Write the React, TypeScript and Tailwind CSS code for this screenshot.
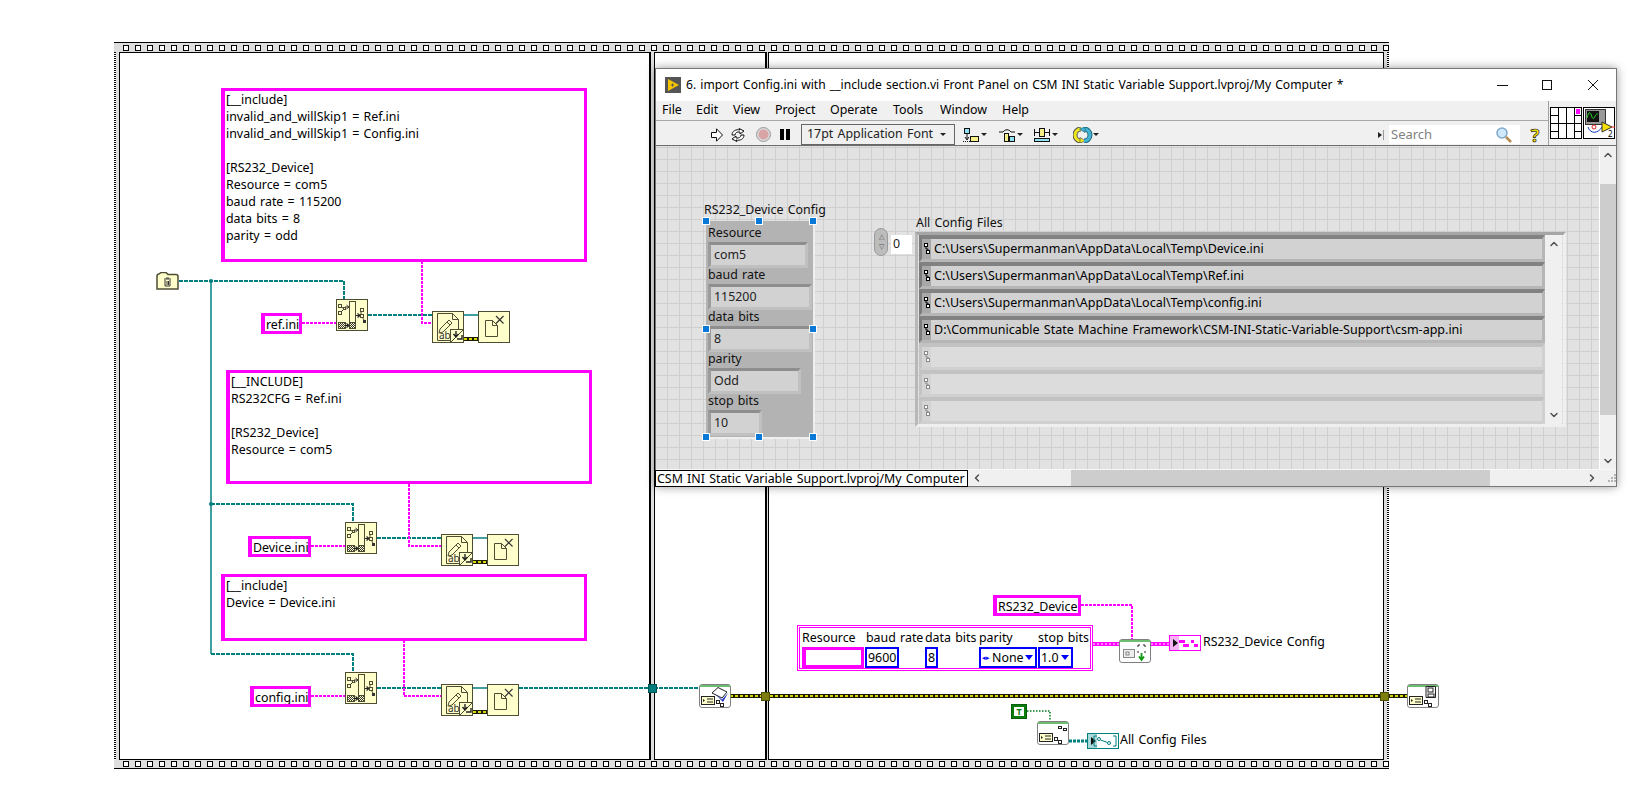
import { ChevronDown, ChevronLeft, ChevronRight, ChevronUp } from "lucide-react";
import type { ReactNode } from "react";

const squares = Array.from({ length: 106 }, (_, i) => i);

const tealWires = [
  "M179 281H344V299",
  "M211 654H353V672",
  "M211 504H353V522",
  "M368 315H432",
  "M377 538H441",
  "M377 688H441",
  "M519 688H699",
];

const pinkWires = [
  "M302 323H336",
  "M422 261V323H432",
  "M311 546H345",
  "M409 484V546H441",
  "M311 696H345",
  "M404 640V696H441",
  "M1081 605H1132V639",
];

const errorWires = [
  "M464 339H478",
  "M473 562H487",
  "M473 712H487",
  "M730 696H1407",
];

function StringBox({ className, text }: { className: string; text: string }) {
  return (
    <div
      className={`absolute bg-white border-[3px] border-l-[4px] border-[#ff00ff] pl-[1px] text-[12.4px] leading-[17px] text-black whitespace-pre overflow-hidden ${className}`}
    >
      {text}
    </div>
  );
}

function Filmstrip() {
  return (
    <div className="h-[10px] bg-[#dedede] border-t border-black flex items-center gap-[6px] pl-[9px] overflow-hidden">
      {squares.map((i) => (
        <div key={i} className="w-[6px] h-[6px] shrink-0 bg-white border-[1.5px] border-black" />
      ))}
    </div>
  );
}

function Checker() {
  return (
    <div className="w-[2px] bg-[repeating-linear-gradient(to_bottom,#000_0,#000_1px,#fff_1px,#fff_2px)]" />
  );
}

function Divider({ className }: { className: string }) {
  return <div className={`bg-[#dedede] border-l-2 border-r border-black ${className}`} />;
}

function Hatch() {
  return (
    <defs>
      <pattern id="hatch" width="2" height="2" patternUnits="userSpaceOnUse">
        <rect width="2" height="2" fill="#ffffcc" />
        <rect width="1" height="1" fill="#333" />
        <rect x="1" y="1" width="1" height="1" fill="#333" />
      </pattern>
    </defs>
  );
}

function BuildPathIcon({ className }: { className: string }) {
  return (
    <svg viewBox="0 0 32 32" className={`absolute w-[32px] h-[32px] ${className}`}>
      <Hatch />
      <rect x="0.5" y="0.5" width="31" height="31" fill="#ffffcc" stroke="#4d4d33" />
      <rect x="13.5" y="2.5" width="6" height="26" fill="#ffffcc" stroke="#4d4d33" />
      <rect x="13.5" y="23.5" width="6" height="6" fill="url(#hatch)" stroke="#4d4d33" />
      <rect x="2.5" y="23.5" width="7" height="6" fill="url(#hatch)" stroke="#4d4d33" />
      <path d="M9 26.5H12M10.5 24.5L13 26.5L10.5 28.5" fill="none" stroke="#222" strokeWidth="1.2" />
      <rect x="2.5" y="5.5" width="3" height="3" fill="none" stroke="#4d4d33" />
      <rect x="2.5" y="12.5" width="3" height="3" fill="none" stroke="#4d4d33" />
      <rect x="7.5" y="8.5" width="2" height="2" fill="none" stroke="#4d4d33" />
      <path d="M5 8L7 9M5 13L7 11M9 8H12M10.5 6L13 8L10.5 10" fill="none" stroke="#333" />
      <path d="M20 16.5H23M21.5 14.5L24 16.5L21.5 18.5" fill="none" stroke="#222" strokeWidth="1.2" />
      <rect x="24.5" y="9.5" width="3" height="3" fill="none" stroke="#4d4d33" />
      <rect x="24.5" y="15.5" width="3" height="3" fill="none" stroke="#4d4d33" />
      <rect x="27" y="21" width="3" height="3" fill="#333" />
      <path d="M25 12V15M26 18L28 21" stroke="#4d4d33" />
    </svg>
  );
}

function WriteIcon({ className }: { className: string }) {
  return (
    <svg viewBox="0 0 32 32" className={`absolute w-[32px] h-[32px] ${className}`}>
      <rect x="0.5" y="0.5" width="31" height="31" fill="#ffffcc" stroke="#4d4d33" />
      <path d="M5.5 2.5H20.5L26.5 8.5V29.5H5.5Z" fill="#ffffcc" stroke="#4d4d33" />
      <path d="M20.5 2.5V8.5H26.5" fill="none" stroke="#4d4d33" />
      <path d="M8 18L17 9L20 12L11 21L7 22Z" fill="#ffffcc" stroke="#4d4d33" />
      <path d="M15 11L18 14" stroke="#4d4d33" />
      <text x="7" y="28" fontSize="10" fill="#333">ab</text>
      <rect x="18.5" y="18.5" width="13" height="13" fill="#ffffcc" stroke="#4d4d33" />
      <path d="M19 31L31 19" stroke="#4d4d33" />
      <path d="M24 20V25M21.5 23L24 26L26.5 23M30 24V28H25" fill="none" stroke="#222" strokeWidth="1.4" />
    </svg>
  );
}

function CloseIcon({ className }: { className: string }) {
  return (
    <svg viewBox="0 0 32 32" className={`absolute w-[32px] h-[32px] ${className}`}>
      <rect x="0.5" y="0.5" width="31" height="31" fill="#ffffcc" stroke="#4d4d33" />
      <path d="M7.5 9.5H14.5L19.5 14.5V25.5H7.5Z" fill="none" stroke="#4d4d33" />
      <path d="M14.5 9.5V14.5H19.5" fill="none" stroke="#4d4d33" />
      <path d="M18 5L25.5 12.5M25.5 5L18 12.5" stroke="#333" strokeWidth="1.2" />
    </svg>
  );
}

function ConfigBox() {
  return (
    <g>
      <rect x="2.5" y="12.5" width="13" height="8" fill="#ffffcc" stroke="#222" />
      <path d="M4 15L6 16.5L4 18" fill="#222" />
      <path d="M8 15H14M8 18H14" stroke="#222" />
      <rect x="17.5" y="16.5" width="3" height="3" fill="none" stroke="#222" />
      <rect x="21.5" y="19.5" width="3" height="3" fill="none" stroke="#222" />
    </g>
  );
}

function ApiNode({ className, children }: { className: string; children: ReactNode }) {
  return (
    <svg viewBox="0 0 32 24" className={`absolute w-[32px] h-[24px] ${className}`}>
      <rect x="0.5" y="0.5" width="31" height="23" rx="2.5" fill="#fff" stroke="#808080" />
      <rect x="1" y="1" width="30" height="2" fill="#6ebd6e" />
      {children}
    </svg>
  );
}

function ToolIcons() {
  return (
    <>
      <svg viewBox="0 0 24 16" className="w-[24px] h-[16px] ml-[8px]">
        <rect x="1.5" y="1.5" width="5" height="5" fill="#8fe0f0" stroke="#111" />
        <rect x="7.5" y="9.5" width="8" height="5" fill="#f6f08a" stroke="#111" />
        <path d="M4 7V12M2 10L4 13L6 10" fill="none" stroke="#111" />
        <path d="M0 14.500H7" stroke="#111" strokeDasharray="1 1" />
        <path d="M18 6H24L21 9Z" fill="#222" />
      </svg>
      <svg viewBox="0 0 24 16" className="w-[24px] h-[16px] ml-[12px]">
        <path d="M0 5H4C6 2 10 2 12 5H16" fill="none" stroke="#111" />
        <rect x="5.500" y="6.500" width="4" height="8" fill="#f6f08a" stroke="#111" />
        <rect x="10.500" y="9.500" width="5" height="5" fill="#8fe0f0" stroke="#111" />
        <path d="M18 6H24L21 9Z" fill="#222" />
      </svg>
      <svg viewBox="0 0 24 16" className="w-[24px] h-[16px] ml-[11px]">
        <rect x="0.500" y="11.500" width="15" height="3" fill="#8fe0f0" stroke="#111" />
        <rect x="5.500" y="1.500" width="5" height="8" fill="#f6f08a" stroke="#111" />
        <path d="M0.500 2V9M15.500 2V9M1 5.500H5M11 5.500H15" fill="none" stroke="#111" />
        <path d="M18 6H24L21 9Z" fill="#222" />
      </svg>
      <svg viewBox="0 0 26 16" className="w-[26px] h-[16px] ml-[15px]" fill="none">
        <path d="M8 2A6 6 0 0 0 8 14" stroke="#555" strokeWidth="5" />
        <path d="M8 2A6 6 0 0 0 8 14" stroke="#f0e81c" strokeWidth="3" />
        <path d="M7 10.500L12.500 14L7 16Z" fill="#f0e81c" stroke="#555" strokeWidth="0.700" />
        <path d="M11 14A6 6 0 0 0 11 2" stroke="#1d6a80" strokeWidth="5" />
        <path d="M11 14A6 6 0 0 0 11 2" stroke="#45b4d4" strokeWidth="3" />
        <path d="M12 0L6.500 2L12 5.500Z" fill="#45b4d4" stroke="#1d6a80" strokeWidth="0.700" />
        <path d="M20 6H26L23 9Z" fill="#222" />
      </svg>
    </>
  );
}

function CtlBox({ className, text }: { className: string; text: string }) {
  return (
    <div
      className={`ml-[2px] h-[26px] bg-[#d2d2d2] border-[3px] border-t-[#8e8e8e] border-l-[#9c9c9c] border-r-[#c0c0c0] border-b-[#c0c0c0] pl-[3px] text-[12.4px] leading-[20px] text-[#222] ${className}`}
    >
      {text}
    </div>
  );
}

function CtlLabel({ text }: { text: string }) {
  return <div className="h-[16px] pl-[2px] text-[12.4px] leading-[14px] text-[#111]">{text}</div>;
}

function Handle({ className }: { className: string }) {
  return <div className={`absolute w-[8px] h-[8px] bg-[#0a78d7] border border-white ${className}`} />;
}

function PathGlyph({ muted }: { muted?: boolean }) {
  const c = muted ? "#8a8a8a" : "#000";
  return (
    <svg viewBox="0 0 6 12" className="w-[6px] h-[12px]">
      <rect x="0.5" y="0.5" width="3" height="3" fill="#fff" stroke={c} />
      <rect x="2.5" y="7.5" width="3" height="3" fill="#fff" stroke={c} />
      <path d="M2 4V6H4V7" fill="none" stroke={c} />
    </svg>
  );
}

function PathRow({ text }: { text?: string }) {
  const filled = text !== undefined;
  return (
    <div
      className={`h-[27px] flex border-t-[4px] border-b-[3px] border-l-[3px] border-r-[3px] ${
        filled
          ? "border-t-[#828282] border-l-[#7c7c7c] border-b-[#b6b6b6] border-r-[#b6b6b6]"
          : "border-t-[#c2c2c2] border-l-[#c4c4c4] border-b-[#d0d0d0] border-r-[#d0d0d0]"
      }`}
    >
      <div className={`w-[9px] flex items-center justify-center ${filled ? "bg-[#a8a8a8]" : "bg-[#d4d4d4]"}`}>
        <PathGlyph muted={!filled} />
      </div>
      <div className={`flex-1 pl-[3px] text-[12.5px] leading-[19px] text-black ${filled ? "bg-[#d2d2d2]" : "bg-[#dcdcdc]"}`}>
        {text}
      </div>
    </div>
  );
}

function BlueBox({ className, children }: { className: string; children: ReactNode }) {
  return (
    <div className={`h-[21px] bg-white border-[2.5px] border-[#0000ff] text-[12.4px] leading-[16px] text-black flex items-center ${className}`}>
      {children}
    </div>
  );
}

function BlueArrow() {
  return (
    <svg viewBox="0 0 8 5" className="w-[8px] h-[5px] ml-auto mr-[2px]">
      <path d="M0 0H8L4 5Z" fill="#0000ff" />
    </svg>
  );
}

export default function App() {
  return (
    <div className="relative w-[1628px] h-[798px] bg-white overflow-hidden font-['Noto_Sans',sans-serif] [word-spacing:1px]">
      {/* flat sequence frame */}
      <div className="absolute left-[114px] top-[42px] w-[1275px] h-[727px] flex flex-col">
        <Filmstrip />
        <div className="flex-1 flex">
          <Checker />
          <div className="w-[3px] bg-[#dedede]" />
          <div className="w-[530px] border-l border-t border-b border-black" />
          <Divider className="w-[6px]" />
          <div className="w-[110px] border-t border-b border-black" />
          <Divider className="w-[4px]" />
          <div className="flex-1 border-t border-b border-r border-black" />
          <div className="w-[3px] bg-[#dedede]" />
          <Checker />
        </div>
        <div className="h-[9px] bg-[#dedede] border-b border-black flex items-center gap-[6px] pl-[9px] overflow-hidden">
          {squares.map((i) => (
            <div key={i} className="w-[6px] h-[6px] shrink-0 bg-white border-[1.5px] border-black" />
          ))}
        </div>
      </div>

      {/* wires */}
      <svg viewBox="0 0 1628 798" className="absolute inset-0 w-[1628px] h-[798px]" fill="none">
        <path d="M211 281V654" stroke="#007f7f" strokeWidth="1.500" />
        {tealWires.map((d) => (
          <path key={d} d={d} stroke="#007f7f" strokeWidth="2" strokeDasharray="4 1" />
        ))}
        {pinkWires.map((d) => (
          <path key={d} d={d} stroke="#ff00ff" strokeWidth="2" strokeDasharray="3 1" />
        ))}
        <path d="M464 315H478M473 538H487M473 688H487" stroke="#007f7f" strokeWidth="1.500" />
        {errorWires.map((d) => (
          <g key={d}>
            <path d={d} stroke="#1c1c00" strokeWidth="4" />
            <path d={d} stroke="#d8d800" strokeWidth="2" strokeDasharray="3 2" />
          </g>
        ))}
        <path d="M1093 644H1119M1151 644H1169" stroke="#ff00ff" strokeWidth="4" />
        <path d="M1093 644H1119M1151 644H1169" stroke="#fff" strokeWidth="1" strokeDasharray="2 2" />
        <path d="M1027 711H1050V721" stroke="#007a1f" strokeWidth="1.500" strokeDasharray="1.500 1.500" />
        <path d="M1069 741H1087" stroke="#007f7f" strokeWidth="3" strokeDasharray="3 1" />
        <circle cx="211" cy="281" r="2" fill="#007f7f" />
        <circle cx="211" cy="504" r="2" fill="#007f7f" />
      </svg>

      {/* tunnels */}
      <div className="absolute left-[648px] top-[684px] w-[9px] h-[9px] bg-[#007c7c] border border-[#00504f]" />
      <div className="absolute left-[761px] top-[692px] w-[9px] h-[9px] bg-[#7d7d10] border border-[#4d4d00]" />
      <div className="absolute left-[1380px] top-[692px] w-[9px] h-[9px] bg-[#7d7d10] border border-[#4d4d00]" />

      {/* left frame */}
      <svg viewBox="0 0 23 18" className="absolute left-[156px] top-[272px] w-[23px] h-[18px]">
        <path d="M1 17V4Q1 2 3 2L5 0.500H10L12 2.500H20Q22 2.500 22 4.500V17Z" fill="#ffffcc" stroke="#4d4d33" strokeWidth="1.500" />
        <path d="M8 7H15M9 8V14H14V8M11 9V13M12.500 9V13M10 6H13" fill="none" stroke="#333" />
      </svg>

      <StringBox className="left-[221px] top-[88px] w-[366px] h-[174px]" text={"[__include]\ninvalid_and_willSkip1 = Ref.ini\ninvalid_and_willSkip1 = Config.ini\n\n[RS232_Device]\nResource = com5\nbaud rate = 115200\ndata bits = 8\nparity = odd"} />
      <StringBox className="left-[226px] top-[370px] w-[366px] h-[114px]" text={"[__INCLUDE]\nRS232CFG = Ref.ini\n\n[RS232_Device]\nResource = com5"} />
      <StringBox className="left-[221px] top-[574px] w-[366px] h-[67px]" text={"[__include]\nDevice = Device.ini"} />

      <StringBox className="left-[261px] top-[313px] w-[41px] h-[21px]" text="ref.ini" />
      <StringBox className="left-[248px] top-[536px] w-[63px] h-[21px]" text="Device.ini" />
      <StringBox className="left-[250px] top-[686px] w-[61px] h-[21px]" text="config.ini" />

      <BuildPathIcon className="left-[336px] top-[299px]" />
      <WriteIcon className="left-[432px] top-[311px]" />
      <CloseIcon className="left-[478px] top-[311px]" />
      <BuildPathIcon className="left-[345px] top-[522px]" />
      <WriteIcon className="left-[441px] top-[534px]" />
      <CloseIcon className="left-[487px] top-[534px]" />
      <BuildPathIcon className="left-[345px] top-[672px]" />
      <WriteIcon className="left-[441px] top-[684px]" />
      <CloseIcon className="left-[487px] top-[684px]" />

      <ApiNode className="left-[699px] top-[684px]">
        <ConfigBox />
        <path d="M13 9L19 3.500L28 8L23 14Z" fill="#fff" stroke="#222" />
        <path d="M16 10L23 15.500L29 9L24 18Z" fill="#2233bb" />
      </ApiNode>

      {/* right frame */}
      <StringBox className="left-[993px] top-[595px] w-[88px] h-[21px]" text="RS232_Device" />

      <div className="absolute left-[797px] top-[625px] w-[296px] h-[46px] border border-[#ff00ff] p-px">
        <div className="h-full border border-[#ff00ff] pl-[2px] text-[12.4px] text-black">
          <div className="flex h-[19px] leading-[19px] whitespace-nowrap">
            <span className="w-[64px]">Resource</span>
            <span className="w-[59px]">baud rate</span>
            <span className="w-[54px]">data bits</span>
            <span className="w-[59px]">parity</span>
            <span>stop bits</span>
          </div>
          <div className="flex h-[21px]">
            <div className="w-[62px] h-[21px] bg-white border-[3px] border-l-[4px] border-[#ff00ff]" />
            <BlueBox className="ml-px w-[34px] pl-[1px]">9600</BlueBox>
            <BlueBox className="ml-[26px] w-[13px] justify-center">8</BlueBox>
            <BlueBox className="ml-[41px] w-[58px]">
              <span className="text-[#0000ff] text-[7px] leading-none pl-[1px] pr-[2px]">◂▸</span>
              None
              <BlueArrow />
            </BlueBox>
            <BlueBox className="ml-px w-[35px] pl-[1px]">
              1.0
              <BlueArrow />
            </BlueBox>
          </div>
        </div>
      </div>

      <ApiNode className="left-[1119px] top-[639px]">
        <rect x="4.500" y="10.500" width="11" height="8" fill="#eee" stroke="#888" />
        <rect x="7" y="13" width="3" height="3" fill="none" stroke="#888" />
        <path d="M19 6H21M24 6H26M19 6V8M26 6V8M19 12V14M26 12V14" stroke="#222" />
        <path d="M22.500 14V20M20 17.500L22.500 21L25 17.500" fill="none" stroke="#119911" strokeWidth="1.800" />
      </ApiNode>

      <svg viewBox="0 0 32 16" className="absolute left-[1169px] top-[635px] w-[32px] h-[16px]">
        <rect x="0.500" y="0.500" width="31" height="15" fill="#fff" stroke="#ff00ff" />
        <rect x="1" y="1" width="9" height="14" fill="#f6b4f6" />
        <path d="M4 4L9 8L4 12Z" fill="#111" />
        <rect x="10" y="5" width="6" height="3" fill="#ff00ff" />
        <rect x="14" y="9" width="6" height="3" fill="#ff00ff" />
        <rect x="22" y="5" width="3" height="3" fill="#ff00ff" />
        <rect x="25" y="9" width="4" height="3" fill="#ff00ff" />
      </svg>
      <div className="absolute left-[1203px] top-[633px] text-[12.4px] leading-[18px] text-black whitespace-nowrap">
        RS232_Device Config
      </div>

      <div className="absolute left-[1011px] top-[704px] w-[16px] h-[15px] bg-[#0a7d0a] border border-[#0a5d0a] p-[2px]">
        <div className="w-full h-full bg-white flex items-center justify-center text-[#0a7d0a] text-[9px] font-bold leading-none">
          T
        </div>
      </div>

      <ApiNode className="left-[1037px] top-[721px]">
        <ConfigBox />
        <rect x="21.500" y="5.500" width="3" height="2" fill="none" stroke="#222" />
        <rect x="26.500" y="7.500" width="3" height="2" fill="none" stroke="#222" />
      </ApiNode>

      <svg viewBox="0 0 32 16" className="absolute left-[1087px] top-[733px] w-[32px] h-[16px]">
        <rect x="0.500" y="0.500" width="31" height="15" fill="#fff" stroke="#007f7f" />
        <rect x="1" y="1" width="9" height="14" fill="#a8d8d8" />
        <path d="M4 4L9 8L4 12Z" fill="#111" />
        <path d="M10 3H7V13H10M26 3H29V13H26" fill="none" stroke="#007f7f" />
        <circle cx="12" cy="6" r="1.500" fill="none" stroke="#007f7f" />
        <circle cx="22" cy="10" r="1.500" fill="none" stroke="#007f7f" />
        <path d="M13.500 7L20.500 9.500" stroke="#007f7f" />
      </svg>
      <div className="absolute left-[1120px] top-[731px] text-[12.4px] leading-[18px] text-black whitespace-nowrap">
        All Config Files
      </div>

      <ApiNode className="left-[1407px] top-[684px]">
        <ConfigBox />
        <path d="M19 2.500H28.500V13.500H19Z" fill="#fff" stroke="#222" />
        <rect x="21" y="4" width="5" height="4" fill="none" stroke="#222" />
        <rect x="21" y="10" width="6" height="3" fill="none" stroke="#222" />
      </ApiNode>

      {/* front panel window */}
      <div className="absolute left-[655px] top-[68px] w-[962px] h-[419px] flex flex-col bg-[#f0f0f0] border border-[#777] shadow-[0_0_9px_rgba(0,0,0,0.4)]">
        <div className="h-[32px] bg-white flex items-center pl-[9px] text-[12.1px] text-black">
          <svg viewBox="0 0 16 16" className="w-[16px] h-[16px] mr-[5px]">
            <rect width="16" height="16" fill="#555" />
            <path d="M3 2L14 8L3 14Z" fill="#f5c400" />
            <path d="M6 8H9M7.500 6.500V9.500" stroke="#555" />
          </svg>
          <span className="whitespace-nowrap">
            6. import Config.ini with __include section.vi Front Panel on CSM INI Static Variable Support.lvproj/My Computer *
          </span>
          <svg viewBox="0 0 101 12" className="ml-auto mr-[18px] w-[101px] h-[12px]" fill="none" stroke="#111">
            <path d="M0 6.500H11" />
            <rect x="45.500" y="1.500" width="9" height="9" />
            <path d="M91 1L101 11M101 1L91 11" />
          </svg>
        </div>

        <div className="h-[45px] flex border-b border-[#6e6e6e]">
          <div className="flex-1 flex flex-col">
            <div className="h-[20px] flex pl-[6px] items-center text-[12.4px] text-black border-b border-[#a8a8a8]">
              <span className="w-[34px]">File</span>
              <span className="w-[37px]">Edit</span>
              <span className="w-[42px]">View</span>
              <span className="w-[55px]">Project</span>
              <span className="w-[63px]">Operate</span>
              <span className="w-[47px]">Tools</span>
              <span className="w-[62px]">Window</span>
              <span>Help</span>
            </div>
            <div className="flex-1 flex items-center pl-[55px] pt-[3px]">
              <svg viewBox="0 0 12 14" className="w-[12px] h-[14px]">
                <path d="M0.500 4.500H5.500V0.800L11.500 7L5.500 13.200V9.500H0.500Z" fill="#fff" stroke="#111" />
              </svg>
              <svg viewBox="0 0 16 14" className="w-[16px] h-[14px] ml-[7px]" fill="none" stroke="#111">
                <path d="M2 7C2 3 6 1 10 2L9 0.500L14 3L10 6L10 4C7 3.500 5 5 5 7Z" fill="#fff" />
                <path d="M14 7C14 11 10 13 6 12L7 13.500L2 11L6 8L6 10C9 10.500 11 9 11 7Z" fill="#fff" />
              </svg>
              <svg viewBox="0 0 15 15" className="w-[15px] h-[15px] ml-[10px]">
                <circle cx="7.500" cy="7.500" r="7" fill="#d9d9d9" stroke="#9a9a9a" />
                <circle cx="7.500" cy="7.500" r="5" fill="#d8a4a4" />
              </svg>
              <div className="w-[10px] h-[11px] ml-[9px] flex justify-between">
                <div className="w-[4px] bg-black" />
                <div className="w-[4px] bg-black" />
              </div>
              <div className="w-[154px] h-[21px] ml-[11px] border border-[#666] flex items-center pl-[5px] pr-[8px] text-[12.4px] text-[#222] whitespace-nowrap">
                17pt Application Font
                <svg viewBox="0 0 6 3" className="w-[6px] h-[3px] ml-auto">
                  <path d="M0 0H6L3 3Z" fill="#222" />
                </svg>
              </div>
              <ToolIcons />
              <svg viewBox="0 0 6 10" className="w-[6px] h-[10px] ml-auto">
                <path d="M0 2L4 5L0 8Z" fill="#222" />
                <path d="M5.500 0V10" stroke="#999" />
              </svg>
              <div className="w-[131px] h-[19px] ml-[5px] bg-white flex items-center pl-[2px] pr-[8px] text-[13px] text-[#808080]">
                Search
                <svg viewBox="0 0 16 16" className="w-[16px] h-[16px] ml-auto">
                  <circle cx="6" cy="6" r="5" fill="#cfe8fb" stroke="#7fa8cc" strokeWidth="1.500" />
                  <path d="M10 10L15 15" stroke="#b58a50" strokeWidth="2.500" />
                </svg>
              </div>
              <span className="w-[12px] ml-[9px] mr-[7px] text-center text-[18px] leading-[20px] font-bold text-[#f5e000] [-webkit-text-stroke:0.7px_#222]">
                ?
              </span>
            </div>
          </div>
          <div className="w-[68px] border-l border-[#a0a0a0] flex gap-px items-center pl-px">
            <svg viewBox="0 0 32 32" className="w-[32px] h-[32px]" fill="none" stroke="#000">
              <rect x="0.500" y="0.500" width="31" height="31" fill="#fff" />
              <path d="M8.500 0V32M16.500 0V32M24.500 0V32M0 8.500H8M0 16.500H8M0 24.500H8M8 16.500H24M24 8.500H32M24 16.500H32M24 24.500H32" />
              <rect x="26" y="2" width="4" height="5" fill="#ff00ff" stroke="none" />
            </svg>
            <svg viewBox="0 0 32 32" className="w-[32px] h-[32px]">
              <rect x="0.500" y="0.500" width="31" height="31" fill="#fff" stroke="#000" />
              <rect x="2.500" y="2.500" width="20" height="15" fill="#999" stroke="#333" />
              <rect x="4" y="4" width="12" height="11" fill="#111" />
              <path d="M4 11C6 4 7 4 9 10C11 15 12 6 15 7" fill="none" stroke="#22dd22" />
              <path d="M5 20C7 27 15 27 19 20" fill="none" stroke="#1133bb" />
              <circle cx="11" cy="20" r="2" fill="none" stroke="#dd2222" />
              <path d="M19 15L29 20L19 25Z" fill="#f5e000" stroke="#333" />
              <path d="M28 20H32" stroke="#dd2222" />
              <text x="25" y="30" fontSize="8" fill="#000">2</text>
            </svg>
          </div>
        </div>

        <div className="flex-1 flex min-h-0">
          <div className="relative flex-1 border-r border-white bg-[#e2e2e2] bg-[linear-gradient(#cfcfcf_1px,transparent_1px),linear-gradient(90deg,#cfcfcf_1px,transparent_1px)] bg-[size:12px_12px] bg-[position:11px_13px]">
            <div className="absolute left-[48px] top-[55px] text-[12.4px] leading-[18px] text-[#111] whitespace-nowrap">
              RS232_Device Config
            </div>
            <div className="absolute left-[50px] top-[75px] w-[109px] h-[218px] pt-[5px] bg-[#b3b3b3] border-r-2 border-b-2 border-[#eeeeee]">
              <CtlLabel text="Resource" />
              <CtlBox className="w-[100px]" text="com5" />
              <CtlLabel text="baud rate" />
              <CtlBox className="w-[104px]" text="115200" />
              <CtlLabel text="data bits" />
              <CtlBox className="w-[104px]" text="8" />
              <CtlLabel text="parity" />
              <CtlBox className="w-[93px]" text="Odd" />
              <CtlLabel text="stop bits" />
              <CtlBox className="w-[54px]" text="10" />
            </div>
            <Handle className="left-[46px] top-[71px]" />
            <Handle className="left-[99px] top-[71px]" />
            <Handle className="left-[153px] top-[71px]" />
            <Handle className="left-[46px] top-[179px]" />
            <Handle className="left-[153px] top-[179px]" />
            <Handle className="left-[46px] top-[287px]" />
            <Handle className="left-[99px] top-[287px]" />
            <Handle className="left-[153px] top-[287px]" />

            {/* array index */}
            <div className="absolute left-[218px] top-[82px] w-[14px] h-[28px] rounded-full bg-[#bcbcbc] border border-[#9a9a9a] flex flex-col items-center justify-center text-[7px] leading-[10px] text-[#555]">
              <span>△</span>
              <span>▽</span>
            </div>
            <div className="absolute left-[235px] top-[89px] w-[21px] h-[19px] bg-white pl-[2px] text-[12.4px] leading-[18px] text-[#222]">
              0
            </div>

            <div className="absolute left-[260px] top-[68px] text-[12.4px] leading-[18px] text-[#111] whitespace-nowrap">
              All Config Files
            </div>
            <div className="absolute left-[259px] top-[86px] w-[651px] h-[195px] flex border-[3px] border-t-[#a6a6a6] border-l-[#b8b8b8] border-r-[#efefef] border-b-[#efefef] pl-px">
              <div className="w-[626px]">
                <PathRow text={"C:\\Users\\Supermanman\\AppData\\Local\\Temp\\Device.ini"} />
                <PathRow text={"C:\\Users\\Supermanman\\AppData\\Local\\Temp\\Ref.ini"} />
                <PathRow text={"C:\\Users\\Supermanman\\AppData\\Local\\Temp\\config.ini"} />
                <PathRow text={"D:\\Communicable State Machine Framework\\CSM-INI-Static-Variable-Support\\csm-app.ini"} />
                <PathRow />
                <PathRow />
                <PathRow />
              </div>
              <div className="w-[17px] h-[189px] bg-[#f0f0f0] flex flex-col items-center justify-between py-[3px] text-[#505050]">
                <ChevronUp size={12} strokeWidth={3} />
                <ChevronDown size={12} strokeWidth={3} />
              </div>
            </div>
          </div>
          <div className="w-[16px] flex flex-col items-center justify-between pb-[2px] text-[#505050]">
            <div className="w-full flex flex-col items-center">
              <div className="h-[38px] pt-[3px]">
                <ChevronUp size={12} strokeWidth={3} />
              </div>
              <div className="w-full h-[231px] bg-[#cdcdcd]" />
            </div>
            <ChevronDown size={12} strokeWidth={3} />
          </div>
        </div>

        <div className="h-[17px] flex items-center border-t border-[#f8f8f8] text-[#505050]">
          <div className="w-[313px] h-[17px] -ml-px bg-white border border-black pl-[1px] text-[12.4px] leading-[15px] text-black whitespace-nowrap">
            CSM INI Static Variable Support.lvproj/My Computer
          </div>
          <ChevronLeft size={12} strokeWidth={3} className="ml-[3px]" />
          <div className="w-[420px] h-[16px] ml-[88px] bg-[#cdcdcd]" />
          <ChevronRight size={12} strokeWidth={3} className="ml-[96px]" />
          <svg viewBox="0 0 8 8" className="w-[8px] h-[8px] ml-[10px]" fill="#b4b4b4">
            <rect x="6" y="0" width="2" height="2" />
            <rect x="3" y="3" width="2" height="2" />
            <rect x="6" y="3" width="2" height="2" />
            <rect x="0" y="6" width="2" height="2" />
            <rect x="3" y="6" width="2" height="2" />
            <rect x="6" y="6" width="2" height="2" />
          </svg>
        </div>
      </div>
    </div>
  );
}
